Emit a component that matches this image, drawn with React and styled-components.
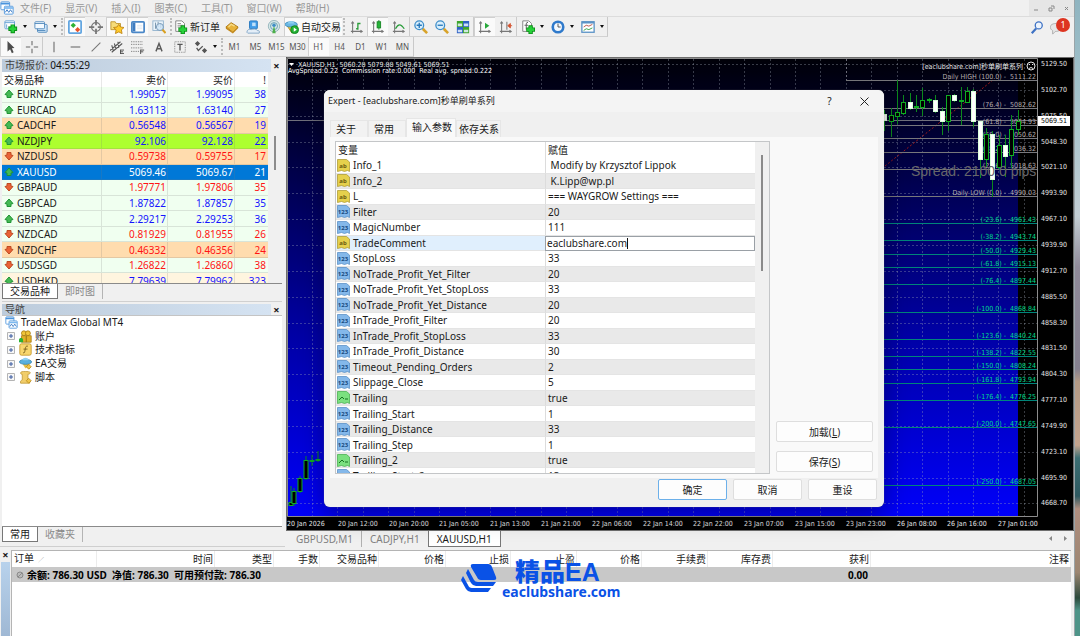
import React, { useState } from 'react';
import styled, { createGlobalStyle, css } from 'styled-components';

const menus = ['文件(F)', '显示(V)', '插入(I)', '图表(C)', '工具(T)', '窗口(W)', '帮助(H)'];
const frames = ['M1', 'M5', 'M15', 'M30', 'H1', 'H4', 'D1', 'W1', 'MN'];

const quotes = [
  { name: 'EURNZD', bid: '1.99057', ask: '1.99095', spread: 38, up: true },
  { name: 'EURCAD', bid: '1.63113', ask: '1.63140', spread: 27, up: true },
  { name: 'CADCHF', bid: '0.56548', ask: '0.56567', spread: 19, up: true, bg: '#ffdcae' },
  { name: 'NZDJPY', bid: '92.106', ask: '92.128', spread: 22, up: true, bg: '#adff2f' },
  { name: 'NZDUSD', bid: '0.59738', ask: '0.59755', spread: 17, up: false, bg: '#ffdcae' },
  { name: 'XAUUSD', bid: '5069.46', ask: '5069.67', spread: 21, up: true, bg: '#0078d7', selected: true },
  { name: 'GBPAUD', bid: '1.97771', ask: '1.97806', spread: 35, up: false },
  { name: 'GBPCAD', bid: '1.87822', ask: '1.87857', spread: 35, up: true },
  { name: 'GBPNZD', bid: '2.29217', ask: '2.29253', spread: 36, up: true },
  { name: 'NZDCAD', bid: '0.81929', ask: '0.81955', spread: 26, up: false },
  { name: 'NZDCHF', bid: '0.46332', ask: '0.46356', spread: 24, up: false, bg: '#ffdcae' },
  { name: 'USDSGD', bid: '1.26822', ask: '1.26860', spread: 38, up: false },
  { name: 'USDHKD', bid: '7.79639', ask: '7.79962', spread: 323, up: true, bg: '#fff5df' },
];

const params = [
  ['ab', 'Info_1', '\u00a0Modify by Krzysztof Lippok'],
  ['ab', 'Info_2', '\u00a0K.Lipp@wp.pl'],
  ['ab', 'L_', '=== WAYGROW Settings ==='],
  ['num', 'Filter', '20'],
  ['num', 'MagicNumber', '111'],
  ['ab', 'TradeComment', 'eaclubshare.com'],
  ['num', 'StopLoss', '33'],
  ['num', 'NoTrade_Profit_Yet_Filter', '20'],
  ['num', 'NoTrade_Profit_Yet_StopLoss', '33'],
  ['num', 'NoTrade_Profit_Yet_Distance', '20'],
  ['num', 'InTrade_Profit_Filter', '20'],
  ['num', 'InTrade_Profit_StopLoss', '33'],
  ['num', 'InTrade_Profit_Distance', '30'],
  ['num', 'Timeout_Pending_Orders', '2'],
  ['num', 'Slippage_Close', '5'],
  ['bool', 'Trailing', 'true'],
  ['num', 'Trailing_Start', '1'],
  ['num', 'Trailing_Distance', '33'],
  ['num', 'Trailing_Step', '1'],
  ['bool', 'Trailing_2', 'true'],
  ['num', 'Trailing_Start_2', '13'],
];

const orderColumns = [
  ['订单', 85], ['时间', 118], ['类型', 59], ['手数', 46], ['交易品种', 59], ['价格', 67], ['止损', 65],
  ['止盈', 66], ['价格', 65], ['手续费', 66], ['库存费', 65], ['获利', 98], ['注释'],
];

const prices = [
  '5129.50', '5102.70', '5075.50', '5048.30', '5021.10', '4993.90', '4967.10', '4939.90', '4912.70',
  '4885.50', '4858.30', '4831.50', '4804.30', '4777.10', '4749.90', '4723.10', '4695.90', '4668.70',
];

const times = [
  '20 Jan 2026', '20 Jan 12:00', '20 Jan 20:00', '21 Jan 05:00', '21 Jan 13:00', '21 Jan 21:00',
  '22 Jan 06:00', '22 Jan 14:00', '22 Jan 22:00', '23 Jan 07:00', '23 Jan 15:00', '23 Jan 23:00',
  '26 Jan 08:00', '26 Jan 16:00', '27 Jan 01:00',
];

const dailyLevels = [
  ['Daily HIGH (100.0) -\u00a0 5111.22', 80],
  ['(76.4) -\u00a0 5082.62', 108],
  ['(61.8) -\u00a0 5064.93', 125],
  ['(50.0) -\u00a0 5050.62', 138],
  ['(38.2) -\u00a0 5036.32', 152],
  ['(23.6) -\u00a0 5018.63', 169],
  ['Daily LOW (0.0) -\u00a0 4990.03', 196],
];

const targetLevels = [
  ['(-23.6) -\u00a0 4961.43', 223],
  ['(-38.2) -\u00a0 4943.74', 240],
  ['(-50.0) -\u00a0 4929.43', 254],
  ['(-61.8) -\u00a0 4915.13', 267],
  ['(-76.4) -\u00a0 4897.44', 284],
  ['(-100.0) -\u00a0 4868.84', 312],
  ['(-123.6) -\u00a0 4840.24', 339],
  ['(-138.2) -\u00a0 4822.55', 356],
  ['(-150.0) -\u00a0 4808.24', 369],
  ['(-161.8) -\u00a0 4793.94', 383],
  ['(-176.4) -\u00a0 4776.25', 400],
  ['(-200.0) -\u00a0 4747.65', 427],
  ['(-250.0) -\u00a0 4687.05', 485],
];

// x, wick top, wick bottom, body top, body bottom, bearish
const candles = [
  [291, 486, 506, 502, 505, 0], [294, 488, 506, 491, 503, 0], [300, 476, 493, 478, 491, 0],
  [306, 456, 480, 460, 478, 0], [312, 455, 466, 460, 461, 0], [318, 451, 462, 459, 460, 0],
  [884.5, 110, 131, 114, 120, 1], [891.5, 108, 137, 115, 121, 0], [897.5, 80, 124, 112, 116, 0],
  [903.5, 95, 115, 102, 113, 0], [910.5, 93, 110, 102, 108, 1], [916.5, 95, 112, 106, 107, 0],
  [922.5, 88, 116, 100, 107, 0], [929.5, 98, 103, 99, 100, 0], [935.5, 95, 113, 100, 111, 1],
  [942.5, 107, 135, 111, 121, 1], [948.5, 95, 131, 95, 121, 0], [954.5, 94, 102, 95, 100, 1],
  [961.5, 87, 125, 100, 101, 0], [967.5, 87, 103, 91, 102, 0], [973.5, 89, 127, 91, 121, 1],
  [980.5, 121, 178, 121, 159, 1], [986.5, 128, 167, 134, 159, 0], [992.5, 131, 197, 134, 179, 1],
  [999.5, 135, 170, 145, 167, 0], [1005.5, 135, 177, 145, 156, 1], [1011.5, 115, 168, 129, 155, 0],
  [1018.5, 110, 135, 121, 129, 0],
];

const icons = {
  app: (
    <>
      <rect x="1" y="1" width="10" height="9" rx="1" fill="#fff" stroke="#4a94dc" />
      <path d="M1 3h10" stroke="#4a94dc" strokeWidth="2" />
      <rect x="5" y="6" width="10" height="9" rx="1" fill="#fff" stroke="#4a94dc" />
      <path d="M5 8h10" stroke="#7db9ef" strokeWidth="2" />
      <path d="M6 13l2-3 2 3 2-3 2 3" fill="none" stroke="#2a6fc0" />
    </>
  ),
  newChart: (
    <>
      <rect x="1" y="1" width="11" height="9" rx="1" fill="#fff" stroke="#5b9bd2" />
      <path d="M1 3h11M3 5v4M5 8h5" stroke="#5b9bd2" />
      <path d="M10 5v10M5 10h10" stroke="#0b8f16" strokeWidth="5" />
      <path d="M10 6v8M6 10h8" stroke="#27d13a" strokeWidth="3" />
    </>
  ),
  profiles: (
    <>
      <rect x="4" y="5" width="11" height="9" rx="1" fill="#cfe5f8" stroke="#4b86ba" />
      <rect x="1" y="2" width="11" height="8" rx="1" fill="#f4faff" stroke="#4b86ba" />
      <path d="M1 4h11M4 12h9" stroke="#4b86ba" />
    </>
  ),
  market: (
    <>
      <rect x="1" y="1" width="14" height="14" rx="1" fill="#fff" stroke="#62a5e0" strokeWidth="2" />
      <path d="M6 3l3 3-3 3-3-3z" fill="#2eb135" />
      <path d="M11 8l3 3-3 3-3-3z" fill="#e8532b" />
    </>
  ),
  cross: (
    <>
      <circle cx="8" cy="8" r="5" fill="none" stroke="#767676" strokeWidth="1.5" />
      <path d="M8 0v6M8 10v6M0 8h6M10 8h6" stroke="#767676" strokeWidth="2" />
    </>
  ),
  folderStar: (
    <>
      <path d="M1 2h5l1 2h5v7H1z" fill="#f6dc79" stroke="#bd932a" />
      <path d="M10 5l2 3 4 .6-3 2.7.8 4.2L10 13.6l-3.8 1.9.8-4.2-3-2.7 4-.6z" fill="#ffcb2c" stroke="#bf8512" />
    </>
  ),
  navigator: (
    <>
      <rect x="1" y="2" width="14" height="12" rx="1" fill="#fff" stroke="#4b88c8" strokeWidth="2" />
      <path d="M2 3h3v10H2z" fill="#3f7cc0" />
      <path d="M7 6h6M7 8h6M7 10h6" stroke="#dbe6f1" />
    </>
  ),
  tester: (
    <>
      <rect x="1" y="1" width="12" height="11" fill="#eaf3fa" stroke="#8fb0cc" />
      <path d="M4 3v7M7 2v6M10 4v5" stroke="#6d8ba5" />
      <circle cx="9" cy="8" r="4" fill="#cfe6f9" fillOpacity=".8" stroke="#7295b3" />
      <path d="M12 11l3.5 4" stroke="#d9a021" strokeWidth="2.5" />
    </>
  ),
  newOrder: (
    <>
      <path d="M2 1h7l3 3v9H2z" fill="#fff" stroke="#7b7b7b" />
      <path d="M4 4h4M4 6h6M4 8h6" stroke="#8b8b8b" />
      <path d="M10 6v10M5 11h10" stroke="#0b8f16" strokeWidth="5" />
      <path d="M10 7v8M6 11h8" stroke="#27d13a" strokeWidth="3" />
    </>
  ),
  book: (
    <>
      <path d="M1 8l6-5 8 5-6 6z" fill="#e8b33a" stroke="#a9730f" />
      <path d="M1 8v2l8 5.5 6-6V8l-6 6z" fill="#c58a1c" />
      <path d="M4 8l3-3 4 2" stroke="#f7db85" strokeWidth="1.5" fill="none" />
    </>
  ),
  person: (
    <>
      <rect x="4" y="1" width="9" height="9" rx="1" fill="#3f9be8" stroke="#2475bb" />
      <path d="M7 3h4v4H7z" fill="#bfe1fb" />
      <path d="M1 14c0-3 3-4 5-3 2-1 6-1 7 1 2 0 3 1 2 3H2z" fill="#e4eef8" stroke="#7da2c4" />
    </>
  ),
  signal: (
    <>
      <circle cx="8" cy="7" r="6.5" fill="#d7e7e8" stroke="#8fb1b8" />
      <circle cx="8" cy="7" r="4" fill="none" stroke="#5f9bb0" />
      <path d="M6 15l2-9 2 9z" fill="#4db04a" />
      <circle cx="8" cy="6" r="2" fill="#3f8fc6" />
    </>
  ),
  expert: (
    <>
      <path d="M2 6l6 9 6-9z" fill="#ecc23d" stroke="#b88a1b" />
      <ellipse cx="7" cy="5" rx="7" ry="3" fill="#6bb8e4" stroke="#3b8aba" />
      <path d="M3 4c1-4 7-4 8 0z" fill="#8ed0f2" />
      <circle cx="11" cy="11" r="4.5" fill="#24b133" stroke="#0e8420" />
      <path d="M10 8.5v5l3.5-2.5z" fill="#fff" />
    </>
  ),
  bars: (
    <>
      <path d="M3 2v13M1 13h13M1.5 4L3 2l1.500 2M12 11.500l2 1.500-2 1.500" stroke="#777" strokeWidth="1.2" fill="none" />
      <path d="M9 3v8M9 4h3M7 10h2" stroke="#2a9d3a" strokeWidth="1.5" />
    </>
  ),
  candle: (
    <>
      <path d="M3 2v13M1 13h13M1.5 4L3 2l1.500 2M12 11.500l2 1.500-2 1.500" stroke="#777" strokeWidth="1.2" fill="none" />
      <path d="M9 0v11" stroke="#158523" />
      <rect x="7" y="2" width="4" height="7" fill="#27b53a" stroke="#158523" />
    </>
  ),
  line: (
    <>
      <path d="M3 2v13M1 13h13M1.5 4L3 2l1.500 2M12 11.500l2 1.500-2 1.500" stroke="#777" strokeWidth="1.2" fill="none" />
      <path d="M4 10c3-6 6-6 10 0" stroke="#2a9d3a" strokeWidth="1.5" fill="none" />
    </>
  ),
  zoomIn: (
    <>
      <path d="M10 10l5 5" stroke="#d8a32a" strokeWidth="3" />
      <circle cx="6" cy="6" r="5" fill="#d9effc" stroke="#3d8dc9" strokeWidth="1.5" />
      <path d="M6 3v6M3 6h6" stroke="#2677bb" strokeWidth="1.5" />
    </>
  ),
  zoomOut: (
    <>
      <path d="M10 10l5 5" stroke="#d8a32a" strokeWidth="3" />
      <circle cx="6" cy="6" r="5" fill="#d9effc" stroke="#3d8dc9" strokeWidth="1.5" />
      <path d="M3 6h6" stroke="#2677bb" strokeWidth="1.5" />
    </>
  ),
  tile: (
    <>
      <path d="M1 1h7v7H1zM8 8h7v7H8z" fill="#3ea52c" />
      <path d="M8 1h7v7H8zM1 8h7v7H1z" fill="#2e62c4" />
      <path d="M2 4h5v3H2zM9 4h5v3H9zM2 11h5v3H2zM9 11h5v3H9z" fill="#e9f4ff" fillOpacity=".85" />
    </>
  ),
  autoScroll: (
    <>
      <path d="M3 2v13M1 13h13M1.5 4L3 2l1.500 2M12 11.500l2 1.500-2 1.500" stroke="#777" strokeWidth="1.2" fill="none" />
      <path d="M8 3v7l5-3.5z" fill="#27a83a" />
    </>
  ),
  shift: (
    <>
      <path d="M3 2v13M1 13h13M1.5 4L3 2l1.500 2M12 11.500l2 1.500-2 1.500M9 2v9" stroke="#777" strokeWidth="1.2" fill="none" />
      <path d="M10 6.500l3-2.500v5zM13 6.500h2" fill="#d4502b" stroke="#d4502b" />
    </>
  ),
  indicators: (
    <>
      <path d="M2 1h7l3 3v9H2z" fill="#fff" stroke="#7b7b7b" />
      <path d="M8 3c-2-1-2 1-2 3v5M4 6h4" stroke="#555" fill="none" />
      <path d="M11 6v10M6 11h10" stroke="#0b8f16" strokeWidth="5" />
      <path d="M11 7v8M7 11h8" stroke="#27d13a" strokeWidth="3" />
    </>
  ),
  clock: (
    <>
      <circle cx="8" cy="8" r="6" fill="#f3f9ff" stroke="#2f7acb" strokeWidth="3" />
      <path d="M8 4v4h3" stroke="#444" fill="none" />
    </>
  ),
  template: (
    <>
      <rect x="1" y="2" width="14" height="12" fill="#fff" stroke="#5b93c6" strokeWidth="1.5" />
      <path d="M1 3h14" stroke="#5b93c6" strokeWidth="2" />
      <path d="M3 8l3-2 3 1 4-2" stroke="#b5473a" fill="none" />
      <path d="M3 12l3-2 3 1 4-2" stroke="#2a9d3a" fill="none" />
    </>
  ),
  cursor: <path d="M4 1l8 8-3 .5 2 4.500-2 1-2-4.500L4 13z" fill="#4d4d4d" />,
  crosshair: <path d="M8 1v5M8 10v5M1 8h5M10 8h5" stroke="#666" strokeWidth="1.2" />,
  vline: <path d="M8 2v12" stroke="#666" strokeWidth="1.2" />,
  hline: <path d="M3 8h11" stroke="#666" strokeWidth="1.2" />,
  tline: <path d="M3 13L13 3" stroke="#777" strokeWidth="1.2" />,
  channel: (
    <>
      <path d="M0 12L12 2M2 14L14 4M2 6l2 7M5 4l2 7M9 2l1 7" stroke="#555" strokeWidth="1.2" />
      <path d="M12 11v5M12 11.5h4M12 13.5h3M12 15.5h4" stroke="#444" />
    </>
  ),
  fibo: (
    <>
      <path d="M0 2h14M0 5h14M0 9h14M0 13h9" stroke="#666" strokeDasharray="1 1" />
      <path d="M11 11v5M11 11.5h4M11 13.5h3" stroke="#444" />
    </>
  ),
  text: <path d="M4.500 13L8 4l3.500 9M6 10h4" stroke="#5a5a5a" strokeWidth="1.600" fill="none" />,
  label: (
    <>
      <rect x="2" y="2" width="12" height="12" fill="none" stroke="#777" strokeDasharray="1 1" />
      <path d="M5 5h6M8 5v7" stroke="#555" strokeWidth="1.5" />
    </>
  ),
  arrows: (
    <>
      <path d="M4 1l3 3-3 3-3-3zM12 9l3 3-3 3-3-3z" fill="#555" />
      <path d="M3 9l2 3 5-5" stroke="#555" strokeWidth="1.5" fill="none" />
    </>
  ),
  search: (
    <>
      <circle cx="10" cy="5" r="4" fill="#edf4fd" stroke="#3e72c4" strokeWidth="1.5" />
      <path d="M7 8.5l-5 5.5" stroke="#3e72c4" strokeWidth="2.5" />
    </>
  ),
  chat: <path d="M1 5c2-3 11-3 12 1s-3 6-7 6l-3 3v-4C0 9 0 7 1 5z" fill="#e6e6e6" stroke="#aaa" />,
  accounts: (
    <>
      <circle cx="6" cy="4" r="3" fill="#f0c53a" stroke="#a97d13" />
      <circle cx="11" cy="4" r="3" fill="#f0c53a" stroke="#a97d13" />
      <path d="M3 7h6v8H3zM9 7h6v8H9z" fill="#e2b02a" stroke="#a97d13" />
      <path d="M0 12c0-3 5-3 5 0v3H0z" fill="#2bb232" />
    </>
  ),
  func: (
    <>
      <rect x="1" y="1" width="14" height="14" rx="2" fill="#f7d66e" stroke="#c29426" />
      <path d="M11 4c-3-1-3 2-3.5 4.5S7 13 5 12M5.5 7.5h5" stroke="#6d5313" fill="none" />
    </>
  ),
  robot: (
    <>
      <path d="M4 8l4 6 6-6z" fill="#e8c046" />
      <ellipse cx="8" cy="6" rx="7.5" ry="3" fill="#59b0df" stroke="#3887b5" />
      <path d="M4 4c1-4 7-4 8 0z" fill="#8ed0f2" />
      <path d="M12 9l3 3-3 3-3-3z" fill="#f2c64a" stroke="#b88a1b" />
    </>
  ),
  script: (
    <>
      <path d="M2 2c0-2 11-2 12 0-1 2-2 2-3 2v7c2 0 3 2 2 4H2c-1-2 1-4 2-4V4C3 4 2 4 2 2z" fill="#f1cd6a" stroke="#c19a39" />
      <path d="M12 9l3 3-3 3-3-3z" fill="#f2c64a" stroke="#b88a1b" />
    </>
  ),
};

const Icon = ({ name, size = 14 }) => (
  <svg width={size} height={size} viewBox="0 0 16 16" aria-hidden="true">{icons[name]}</svg>
);

const Arrow = ({ up }) => (
  <svg width="10" height="10" viewBox="0 0 10 10" aria-hidden="true">
    <path
      d={up ? 'M5 1l4 4.500-2 .5v2.500H3V6l-2-.5z' : 'M5 9L1 4.500 3 4V1.500h4V4l2 .5z'}
      fill={up ? '#45b955' : '#ea6236'}
      stroke={up ? '#1f9434' : '#bd4a22'}
    />
  </svg>
);

const tones = {
  ab: ['#e5d04c', '#a8942a', '#6b5a10'],
  num: ['#84b8ea', '#5089c2', '#174a80'],
  bool: ['#7be07f', '#3eac48', '#167322'],
};

const ParamIcon = ({ kind }) => {
  const [fill, edge, ink] = tones[kind];
  return (
    <svg width="13" height="13" viewBox="0 0 13 13" aria-hidden="true">
      <path d="M.5.5h9l3 2.500v9.500l-2-1-3 1-3-1-4 1z" fill={fill} stroke={edge} strokeOpacity=".7" />
      {kind === 'bool' ? (
        <path d="M2 9l3-3 2 2M8 8h3" stroke={ink} fill="none" />
      ) : (
        <ParamMark x="6" y="9" fill={ink}>{kind === 'ab' ? 'ab' : '123'}</ParamMark>
      )}
    </svg>
  );
};

const Tool = ({ name, label, on, drop }) => (
  <ToolButton type="button" aria-label={label || name} $on={on} $drop={drop}>
    <Icon name={name} />
    {drop && <Caret />}
  </ToolButton>
);

const Toolbars = () => (
  <header>
    <MenuBar>
      <Icon name="app" />
      <nav>
        {menus.map((m) => <button type="button" key={m}>{m}</button>)}
      </nav>
      <WindowButtons>
        <button type="button" aria-label="最小化">
          <svg width="7" height="7"><path d="M1 5h4" stroke="#888" /></svg>
        </button>
        <button type="button" aria-label="还原">
          <svg width="7" height="7"><path d="M3 1h3v3M1 3h3v3H1z" stroke="#888" fill="none" /></svg>
        </button>
        <button type="button" aria-label="关闭">
          <svg width="7" height="7"><path d="M2 2l3 3M5 2L2 5" stroke="#888" /></svg>
        </button>
      </WindowButtons>
    </MenuBar>
    <Bars>
      <div>
        <ToolRow>
          <Tool name="newChart" drop />
          <Tool name="profiles" drop />
          <Grip />
          <Tool name="market" on />
          <Tool name="cross" />
          <Tool name="folderStar" on />
          <Tool name="navigator" on />
          <Tool name="tester" />
          <Grip />
          <TextTool type="button"><Icon name="newOrder" />新订单</TextTool>
          <Tool name="book" />
          <Tool name="person" />
          <Tool name="signal" />
          <TextTool type="button" $on><Icon name="expert" />自动交易</TextTool>
          <Grip />
          <Tool name="bars" />
          <Tool name="candle" on />
          <Tool name="line" />
          <Split />
          <Tool name="zoomIn" />
          <Tool name="zoomOut" />
          <Tool name="tile" />
          <Split />
          <Tool name="autoScroll" on />
          <Tool name="shift" />
          <Split />
          <Tool name="indicators" drop />
          <Tool name="clock" drop />
          <Tool name="template" drop />
        </ToolRow>
        <ToolRow>
          <Tool name="cursor" on />
          <Tool name="crosshair" />
          <Split />
          <Tool name="vline" />
          <Tool name="hline" />
          <Tool name="tline" />
          <Tool name="channel" />
          <Tool name="fibo" />
          <Tool name="text" />
          <Tool name="label" />
          <Tool name="arrows" drop />
          <Grip />
          {frames.map((f) => <FrameButton type="button" key={f} $on={f === 'H1'}>{f}</FrameButton>)}
        </ToolRow>
      </div>
      <Alerts>
        <button type="button" aria-label="搜索"><Icon name="search" /></button>
        <button type="button" aria-label="消息">
          <Icon name="chat" />
          <Badge>1</Badge>
        </button>
      </Alerts>
    </Bars>
  </header>
);

const MarketWatch = () => (
  <Dock>
    <DockTitle $height={13}>
      <h2>市场报价: <b>04:55:29</b></h2>
      <CloseButton type="button" aria-label="关闭">×</CloseButton>
    </DockTitle>
    <QuoteView>
      <QuoteTable>
        <colgroup><col /><col width="66" /><col width="67" /><col width="33" /></colgroup>
        <thead>
          <tr><th>交易品种</th><th>卖价</th><th>买价</th><th>!</th></tr>
        </thead>
        <tbody>
          {quotes.map((q) => (
            <QuoteRow key={q.name} $bg={q.bg} $up={q.up} $selected={q.selected}>
              <td><span><Arrow up={q.up} />{q.name}</span></td>
              <td>{q.bid}</td>
              <td>{q.ask}</td>
              <td>{q.spread}</td>
            </QuoteRow>
          ))}
        </tbody>
      </QuoteTable>
      <QuoteScroll><i /></QuoteScroll>
    </QuoteView>
    <TabStrip>
      <DockTab type="button" $on>交易品种</DockTab>
      <DockTab type="button">即时图</DockTab>
    </TabStrip>
  </Dock>
);

const Navigator = () => (
  <Dock $grow>
    <DockTitle $height={11}>
      <h2>导航</h2>
      <CloseButton type="button" aria-label="关闭">×</CloseButton>
    </DockTitle>
    <Tree>
      <ul>
        <TreeItem><Icon name="app" size={13} />TradeMax Global MT4</TreeItem>
        {[['accounts', '账户'], ['func', '技术指标'], ['robot', 'EA交易'], ['script', '脚本']].map(([icon, name]) => (
          <TreeItem key={name} $child>
            <Expander type="button" aria-label={`展开 ${name}`}>
              <svg width="8" height="8">
                <path d="M.5.5h7v7h-7z" fill="#f7f7f7" stroke="#b4b4b4" />
                <path d="M2 4h4M4 2v4" stroke="#3a5aa0" />
              </svg>
            </Expander>
            <Icon name={icon} size={13} />
            {name}
          </TreeItem>
        ))}
      </ul>
    </Tree>
    <TabStrip>
      <DockTab type="button" $on>常用</DockTab>
      <DockTab type="button">收藏夹</DockTab>
    </TabStrip>
  </Dock>
);

const Chart = () => (
  <ChartSvg viewBox="286 57 788 474" preserveAspectRatio="xMinYMin meet" role="img" aria-label="XAUUSD,H1">
    <defs>
      <linearGradient id="sky" x1="0" y1="0" x2="0" y2="1">
        <stop offset="0" stopColor="#000008" />
        <stop offset=".3" stopColor="#000058" />
        <stop offset=".6" stopColor="#0000a4" />
        <stop offset="1" stopColor="#0000fa" />
      </linearGradient>
    </defs>
    <rect x="286" y="57" width="788" height="474" fill="#000" />
    <rect x="288" y="59" width="730" height="457" fill="url(#sky)" />
    <g stroke="#a0a8b8" strokeOpacity=".35" strokeDasharray="2 2">
      {prices.map((p, i) => {
        const y = Math.round(64 + i * 25.85) + 0.5;
        return <path key={p} d={`M288 ${y}H1037`} />;
      })}
      {Array.from({ length: 29 }, (_, i) => {
        const x = Math.round(312 + i * 25.42) + 0.5;
        return <path key={x} d={`M${x} 59V516`} />;
      })}
    </g>
    <path d="M846.5 59V80.5" stroke="#6b6b78" strokeDasharray="2 2" />
    <path d="M288 120.5H1037" stroke="#70707c" />
    <path d="M885 166L993 80" stroke="#a01818" strokeDasharray="2 2" />
    {dailyLevels.map(([label, y]) => (
      <g key={label}>
        <path d={`M846 ${y + 0.5}H1037`} stroke="#78787c" />
        <ChartText x="1036" y={y - 1} textAnchor="end" fill="#b4acac">{label}</ChartText>
      </g>
    ))}
    {targetLevels.map(([label, y]) => (
      <g key={label}>
        <path d={`M846 ${y + 0.5}H1037`} stroke="#00857a" />
        <ChartText x="1036" y={y - 1} textAnchor="end" fill="#00dc8c">{label}</ChartText>
      </g>
    ))}
    {candles.map(([x, top, bottom, open, close, bear]) => (
      <g key={x}>
        <path d={`M${x} ${top}V${bottom}`} stroke="#0b8a1c" />
        <rect
          x={x - 2}
          y={open + 0.5}
          width="4"
          height={close - open}
          fill={bear ? '#fff' : '#000'}
          stroke={bear ? '#d9ffd9' : '#0fae22'}
        />
      </g>
    ))}
    <SpreadText x="911" y="176">Spread: 2100.0 pips</SpreadText>
    <path d="M287.5 58.5H1037.5V516.5H287.5z" fill="none" stroke="#8c8c8c" />
    <path d="M286.5 531V57.5H1073.5V530.5H286" fill="none" stroke="#6e6e6e" />
    {prices.map((p, i) => (
      <ChartText key={p} x="1041" y={Math.round(64 + i * 25.85) + 2} fill="#e6e6e6">{p}</ChartText>
    ))}
    <rect x="1038" y="116" width="32" height="10" fill="#fff" />
    <ChartText x="1041" y="123" fill="#000">5069.51</ChartText>
    {times.map((t, i) => (
      <ChartText key={t} x={Math.round(287 + i * 50.8)} y="526" fill="#e6e6e6">{t}</ChartText>
    ))}
    <path d="M289 63h5l-2.5 3z" fill="#fff" />
    <ChartText x="298" y="67" fill="#e6e6e6">XAUUSD,H1&nbsp; 5060.28 5079.88 5049.61 5069.51</ChartText>
    <ChartText x="288" y="73" fill="#fff">AvgSpread:0.22&nbsp; Commission rate:0.000&nbsp; Real avg. spread:0.222</ChartText>
    <ChartText x="1023" y="69" textAnchor="end" fill="#e6e6e6">[eaclubshare.com]秒单刷单系列</ChartText>
    <g fill="none" stroke="#e6e6e6">
      <circle cx="1031" cy="66" r="4" />
      <path d="M1029 68.5q2-2 4 0M1029 64.5h1M1032 64.5h1" />
    </g>
  </ChartSvg>
);

const ExpertDialog = () => {
  const [comment, setComment] = useState('eaclubshare.com');

  return (
    <Dialog role="dialog" aria-label="Expert">
      <DialogTitle>
        <h1>Expert - [eaclubshare.com]秒单刷单系列</h1>
        <button type="button" aria-label="帮助">?</button>
        <button type="button" aria-label="关闭">
          <svg width="9" height="9"><path d="M.5.5l8 8M8.5.5l-8 8" stroke="#222" /></svg>
        </button>
      </DialogTitle>
      <DialogTabs>
        <DialogTab type="button" $width={38}>关于</DialogTab>
        <DialogTab type="button" $width={38}>常用</DialogTab>
        <DialogTab type="button" $width={50} $on>输入参数</DialogTab>
        <DialogTab type="button" $width={45}>依存关系</DialogTab>
      </DialogTabs>
      <DialogBody>
        <ParamView>
          <ParamTable>
            <colgroup><col width="209" /><col /></colgroup>
            <thead>
              <tr><th>变量</th><th>赋值</th></tr>
            </thead>
            <tbody>
              {params.map(([kind, name, value]) => (
                <ParamRow key={name} $on={name === 'TradeComment'}>
                  <td><span><ParamIcon kind={kind} />{name}</span></td>
                  {name === 'TradeComment' ? (
                    <td>
                      <Editor>
                        <input aria-label={name} value={comment} onChange={(e) => setComment(e.target.value)} />
                        <i />
                      </Editor>
                    </td>
                  ) : (
                    <td>{value}</td>
                  )}
                </ParamRow>
              ))}
            </tbody>
          </ParamTable>
          <ParamScroll><i /></ParamScroll>
        </ParamView>
        <SideButtons>
          <DialogButton type="button">加载(<u>L</u>)</DialogButton>
          <DialogButton type="button">保存(<u>S</u>)</DialogButton>
        </SideButtons>
      </DialogBody>
      <DialogFooter>
        <DialogButton type="button" $primary>确定</DialogButton>
        <DialogButton type="button">取消</DialogButton>
        <DialogButton type="button">重设</DialogButton>
      </DialogFooter>
    </Dialog>
  );
};

const Terminal = () => (
  <TerminalBox>
    <TerminalRail>
      <CloseButton type="button" aria-label="关闭">×</CloseButton>
      <i />
    </TerminalRail>
    <TerminalBody>
      <OrderTable>
        <colgroup>
          {orderColumns.map(([name, width], i) => <col key={name + i} width={width} />)}
        </colgroup>
        <thead>
          <tr>
            {orderColumns.map(([name], i) => <th key={name + i}>{name}{i === 0 && <small>∕</small>}</th>)}
          </tr>
        </thead>
        <tbody>
          <tr>
            <td colSpan={11}>
              <span>
                <svg width="8" height="8">
                  <circle cx="4" cy="4" r="3" fill="#bbb" stroke="#8a8a8a" />
                  <path d="M2 6l4-4" stroke="#8a8a8a" />
                </svg>
                余额: 786.30 USD&nbsp; 净值: 786.30&nbsp; 可用预付款: 786.30
              </span>
            </td>
            <td>0.00</td>
            <td />
          </tr>
        </tbody>
      </OrderTable>
      <Watermark>
        <svg width="37" height="31" viewBox="0 0 37 31" aria-hidden="true">
          <path d="M12 1h15q3 0 4 3l4 10q1 3-2 3H20q-3 0-4-3L10 4q-1-3 2-3z" fill="#0a52e6" />
          <path d="M7 6l6 11q1 2 4 2h18l-3 4H15q-3 0-5-3L5 10z" fill="#0a52e6" />
          <path d="M2 13l5 9q1 3 4 3h19l-3 4H10q-3 0-5-3L0 17z" fill="#0a52e6" />
        </svg>
        <p>
          <strong>精品EA</strong>
          <span>eaclubshare.com</span>
        </p>
      </Watermark>
    </TerminalBody>
  </TerminalBox>
);

const App = () => (
  <Desktop>
    <GlobalStyle />
    <Window>
      <Toolbars />
      <Workspace>
        <Sidebar>
          <MarketWatch />
          <Navigator />
        </Sidebar>
        <ChartPane>
          <Chart />
          <ChartTabs>
            <ChartTab type="button">GBPUSD,M1</ChartTab>
            <ChartTab type="button">CADJPY,H1</ChartTab>
            <ChartTab type="button" $on>XAUUSD,H1</ChartTab>
            <ChartScroll>
              <button type="button" aria-label="向左"><svg width="5" height="7"><path d="M4 1v5L1 3.5z" fill="#888" /></svg></button>
              <button type="button" aria-label="向右"><svg width="5" height="7"><path d="M1 1v5l3-2.5z" fill="#888" /></svg></button>
            </ChartScroll>
          </ChartTabs>
          <ExpertDialog />
        </ChartPane>
      </Workspace>
      <Terminal />
    </Window>
    <Wallpaper />
  </Desktop>
);

const ui = "'Noto Sans', 'Noto Sans CJK SC', sans-serif";

const GlobalStyle = createGlobalStyle`
  * {
    box-sizing: border-box;
  }
  body {
    margin: 0;
    font-family: ${ui};
    font-size: 10px;
    line-height: 14px;
    color: #1a1a1a;
    background: #efefef;
  }
  button, input {
    padding: 0;
    border: 0;
    background: none;
    font: inherit;
    color: inherit;
  }
  h1, h2, p, ul {
    margin: 0;
    padding: 0;
    font-size: inherit;
    font-weight: 400;
    list-style: none;
  }
  svg {
    display: block;
    flex: none;
  }
  table {
    border-spacing: 0;
    table-layout: fixed;
  }
  th, td {
    padding: 0;
    font-weight: 400;
    white-space: nowrap;
  }
`;

const Desktop = styled.div`
  display: flex;
  min-height: 100vh;
`;

const Window = styled.div`
  display: flex;
  flex: 1;
  flex-direction: column;
  min-width: 0;
  background: #f0f0f0;
`;

const Wallpaper = styled.div`
  width: 6px;
  border-left: 1px solid #9aa4a8;
  background: linear-gradient(
    #8fb4c0 0, #a5c4cc 16%, #c3ced4 34%, #8f8a99 42%, #85808f 58%, #b39a86 60%, #c4a48e 70%,
    #3c6e73 72%, #2d5860 78%, #b08f80 80%, #9c8672 90%, #2c4a3c 94%, #4e9488 96%
  );
`;

const MenuBar = styled.div`
  display: flex;
  align-items: center;
  height: 17px;
  border-bottom: 1px solid #dcdcdc;
  nav {
    display: flex;
    flex: 1;
    gap: 14px;
    padding-left: 6px;
    color: #989898;
  }
`;

const WindowButtons = styled.div`
  display: flex;
  align-self: stretch;
  background: #e6e6e6;
  button {
    display: flex;
    align-items: center;
    justify-content: center;
    width: 15px;
  }
`;

const Bars = styled.div`
  display: flex;
  justify-content: space-between;
`;

const ToolRow = styled.div`
  display: flex;
  width: max-content;
  height: 20px;
  border-right: 1px solid #c9c9c9;
  border-bottom: 1px solid #d2d2d2;
`;

const pressed = css`
  background: #fafafa;
  box-shadow: inset 1px 1px #d0d0d0;
`;

const ToolButton = styled.button`
  display: flex;
  align-items: center;
  justify-content: center;
  gap: 5px;
  width: ${({ $drop }) => ($drop ? 30 : 21)}px;
  ${({ $on }) => $on && pressed}
`;

const Caret = styled.span`
  border: 2px solid transparent;
  border-top: 3px solid #111;
  border-bottom: 0;
`;

const TextTool = styled.button`
  display: flex;
  align-items: center;
  gap: 2px;
  padding: 0 1px;
  ${({ $on }) => $on && pressed}
`;

const Grip = styled.span`
  width: 2px;
  margin: 1px;
  border-left: 2px dotted #bcbcbc;
`;

const Split = styled.span`
  width: 1px;
  background: #cbcbcb;
`;

const FrameButton = styled.button`
  width: 21px;
  font-size: 8px;
  text-align: center;
  color: #555;
  ${({ $on }) => $on && pressed}
`;

const Alerts = styled.div`
  display: flex;
  gap: 6px;
  padding: 4px 10px 0 0;
  button {
    position: relative;
    align-self: flex-start;
  }
`;

const Badge = styled.span`
  position: absolute;
  top: -3px;
  left: 6px;
  width: 14px;
  height: 14px;
  border-radius: 50%;
  font-size: 9px;
  line-height: 14px;
  text-align: center;
  color: #fff;
  background: #dd3420;
`;

const Workspace = styled.main`
  display: flex;
  flex: 1;
`;

const Sidebar = styled.aside`
  display: flex;
  flex-direction: column;
  width: 285px;
  padding: 2px 3px 2px 2px;
  border-bottom: 1px solid #cfcfcf;
`;

const Dock = styled.section`
  display: flex;
  flex-direction: column;
  flex: ${({ $grow }) => ($grow ? 1 : 'none')};
  margin-bottom: 2px;
  padding-bottom: ${({ $grow }) => ($grow ? 0 : 2)}px;
  border-bottom: ${({ $grow }) => ($grow ? 0 : 1)}px solid #d0d0d0;
`;

const DockTitle = styled.div`
  display: flex;
  height: ${({ $height }) => $height}px;
  line-height: ${({ $height }) => $height - 1}px;
  h2 {
    flex: 1;
    padding-left: 3px;
    color: #444;
    background: linear-gradient(90deg, #bccbdb, #d5e3f2);
  }
  b {
    font-weight: 400;
    color: #111;
  }
`;

const CloseButton = styled.button`
  width: 11px;
  font-size: 11px;
  font-weight: 700;
  line-height: 10px;
`;

const QuoteView = styled.div`
  display: flex;
  height: 211px;
  overflow: hidden;
  background: #f0f0f0;
`;

const QuoteTable = styled.table`
  flex: 1;
  width: 266px;
  height: 217px;
  line-height: 14px;
  background: #fff;
  th {
    height: 15px;
    padding-right: 1px;
    text-align: right;
    border-right: 1px solid #e8e8e8;
  }
  td {
    padding-right: 1px;
    text-align: right;
    border-right: 1px solid rgba(120, 120, 120, 0.2);
    border-bottom: 1px solid rgba(120, 120, 120, 0.2);
  }
  th:first-child,
  td:first-child {
    padding-left: 2px;
    text-align: left;
  }
  th:last-child,
  td:last-child {
    padding-right: 2px;
    border-right: 0;
  }
`;

const QuoteRow = styled.tr`
  color: ${({ $up, $selected }) => ($selected ? '#fff' : $up ? '#1414ff' : '#ff1414')};
  background: ${({ $bg }) => $bg || '#f0fff0'};
  td:first-child {
    color: ${({ $selected }) => ($selected ? '#fff' : '#1a1a1a')};
  }
  span {
    display: flex;
    align-items: center;
    gap: 3px;
  }
`;

const QuoteScroll = styled.div`
  width: 14px;
  padding: 64px 0 0 6px;
  i {
    display: block;
    width: 2px;
    height: 34px;
    background: #8c8c8c;
  }
`;

const TabStrip = styled.div`
  display: flex;
  height: 16px;
  border-top: 1px solid #8a8a8a;
`;

const DockTab = styled.button`
  height: 15px;
  padding: 0 7px;
  line-height: 13px;
  color: #8a8a8a;
  border-right: 1px solid #b4b4b4;
  ${({ $on }) =>
    $on &&
    css`
      color: #1a1a1a;
      background: #fff;
      border: 1px solid #777;
      border-top: 0;
    `}
`;

const Tree = styled.div`
  flex: 1;
  border-top: 1px solid #c4c4c4;
  background: #fff;
  ul {
    display: flex;
    flex-direction: column;
    height: 68px;
    line-height: 13px;
  }
`;

const TreeItem = styled.li`
  display: flex;
  flex: 1;
  align-items: center;
  gap: 3px;
  padding-left: ${({ $child }) => ($child ? 5 : 3)}px;
`;

const Expander = styled.button`
  margin-right: 1px;
`;

const ChartPane = styled.div`
  position: relative;
  display: flex;
  flex: 1;
  flex-direction: column;
  min-width: 0;
  padding-left: 1px;
`;

const ChartSvg = styled.svg`
  width: 100%;
  height: auto;
`;

const ChartText = styled.text`
  font-family: 'DejaVu Sans Condensed', ${ui};
  font-size: 7px;
`;

const ParamMark = styled.text`
  font-family: ${ui};
  font-size: 6px;
  font-weight: 700;
  text-anchor: middle;
`;

const SpreadText = styled.text`
  font-family: 'Liberation Sans', Arial, sans-serif;
  font-size: 14px;
  fill: #66666a;
`;

const ChartTabs = styled.div`
  display: flex;
  flex: 1;
  height: 16px;
`;

const ChartTab = styled.button`
  height: 16px;
  padding: 0 8px;
  line-height: 14px;
  color: #808080;
  &:first-child {
    padding-left: 10px;
    border-right: 1px solid #b0b0b0;
  }
  ${({ $on }) =>
    $on &&
    css`
      color: #1a1a1a;
      background: #fff;
      border: 1px solid #777;
      border-top: 0;
    `}
`;

const ChartScroll = styled.div`
  display: flex;
  gap: 10px;
  align-items: center;
  height: 14px;
  margin-left: auto;
  padding-right: 6px;
`;

const Dialog = styled.section`
  position: absolute;
  top: 33px;
  left: 39px;
  display: flex;
  flex-direction: column;
  width: 560px;
  border-radius: 6px;
  background: #f0f0f0;
  box-shadow: 0 0 1px #777, 0 8px 24px rgba(0, 0, 0, 0.35);
`;

const DialogTitle = styled.div`
  display: flex;
  align-items: center;
  height: 22px;
  padding: 0 13px 0 4px;
  border-radius: 6px 6px 0 0;
  background: #f4f4f4;
  h1 {
    flex: 1;
    font-size: 9px;
  }
  button {
    width: 11px;
    margin-left: 25px;
  }
`;

const DialogTabs = styled.div`
  display: flex;
  align-items: flex-end;
  height: 25px;
  padding: 0 6px;
`;

const DialogTab = styled.button`
  width: ${({ $width }) => $width}px;
  height: ${({ $on }) => ($on ? 19 : 17)}px;
  padding: 0 0 ${({ $on }) => ($on ? 2 : 0)}px ${({ $width }) => ($width === 45 ? 2 : 5)}px;
  line-height: 15px;
  text-align: left;
  white-space: nowrap;
  border: 1px solid #e6e6e6;
  border-bottom: 0;
  background: ${({ $on }) => ($on ? '#f9f9f9' : '#f2f2f2')};
`;

const DialogBody = styled.div`
  display: flex;
  gap: 6px;
  height: 341px;
  margin: 0 6px;
  padding: 4px 5px;
  background: #f9f9f9;
`;

const ParamView = styled.div`
  display: flex;
  flex: 1;
  overflow: hidden;
  border: 1px solid #c4c6c8;
  background: #f0f0f0;
`;

const ParamTable = styled.table`
  flex: 1;
  width: 100%;
  height: 342px;
  line-height: 14px;
  background: #fff;
  th {
    height: 16px;
    padding-left: 2px;
    text-align: left;
  }
  td {
    padding-left: 1px;
    border-bottom: 1px solid #e4e4e4;
  }
  th + th,
  td + td {
    padding-left: 2px;
    border-left: 1px solid #dcdcdc;
  }
`;

const ParamRow = styled.tr`
  &:nth-child(even) {
    background: #e9e9e9;
  }
  ${({ $on }) =>
    $on &&
    css`
      &&:nth-child(even) {
        background: #e0effd;
      }
      && td + td {
        padding: 0;
        border: 0;
      }
    `}
  span {
    display: flex;
    align-items: center;
    gap: 3px;
    height: 14px;
  }
`;

const Editor = styled.div`
  display: flex;
  align-items: center;
  height: 15px;
  padding-left: 1px;
  border: 1px solid #9aa0a6;
  background: #fff;
  input {
    field-sizing: content;
    height: 13px;
    outline: 0;
  }
  i {
    width: 1px;
    height: 11px;
    background: #111;
  }
`;

const ParamScroll = styled.div`
  flex: none;
  width: 14px;
  padding: 13px 0 0 6px;
  i {
    display: block;
    width: 2px;
    height: 116px;
    background: #8a8a8a;
  }
`;

const SideButtons = styled.div`
  display: flex;
  flex-direction: column;
  justify-content: flex-end;
  gap: 9px;
  width: 97px;
  padding-bottom: 2px;
`;

const DialogButton = styled.button`
  height: 21px;
  border: 1px solid ${({ $primary }) => ($primary ? '#6cb0ea' : '#dedede')};
  border-radius: 2px;
  background: #fdfdfd;
`;

const DialogFooter = styled.div`
  display: flex;
  justify-content: flex-end;
  gap: 6px;
  padding: 1px 7px 7px;
  ${DialogButton} {
    width: 69px;
  }
`;

const TerminalBox = styled.section`
  display: flex;
  height: 89px;
  padding: 3px 3px 0 0;
`;

const TerminalRail = styled.div`
  display: flex;
  flex-direction: column;
  width: 11px;
  i {
    flex: 1;
    margin: 2px 1px 0;
    background: linear-gradient(#b8d2ec, #9fb8d4);
  }
`;

const TerminalBody = styled.div`
  position: relative;
  flex: 1;
  border-top: 1px solid #b4b4b4;
  border-left: 1px solid #b4b4b4;
  background: #fff;
`;

const OrderTable = styled.table`
  width: 100%;
  th {
    height: 16px;
    padding-right: 1px;
    text-align: right;
    border-right: 1px solid #ececec;
  }
  th:first-child {
    padding-left: 2px;
    text-align: left;
  }
  small {
    margin-left: 4px;
    font-size: 6px;
    color: #888;
  }
  td {
    height: 15px;
    padding-right: 3px;
    font-weight: 700;
    text-align: right;
    color: #000;
    background: #c8c8c8;
  }
  td span {
    display: flex;
    align-items: center;
    gap: 3px;
    padding-left: 4px;
  }
`;

const Watermark = styled.div`
  position: absolute;
  top: 8px;
  left: 449px;
  display: flex;
  align-items: center;
  gap: 4px;
  color: #0a52e6;
  svg {
    margin-bottom: 2px;
  }
  p {
    display: flex;
    flex-direction: column;
    font-weight: 700;
  }
  strong {
    padding-left: 13px;
    font-family: 'Liberation Sans', 'Noto Sans CJK SC', sans-serif;
    font-size: 25px;
    line-height: 26px;
  }
  span {
    font-size: 14px;
    line-height: 14px;
  }
`;

export default App;
